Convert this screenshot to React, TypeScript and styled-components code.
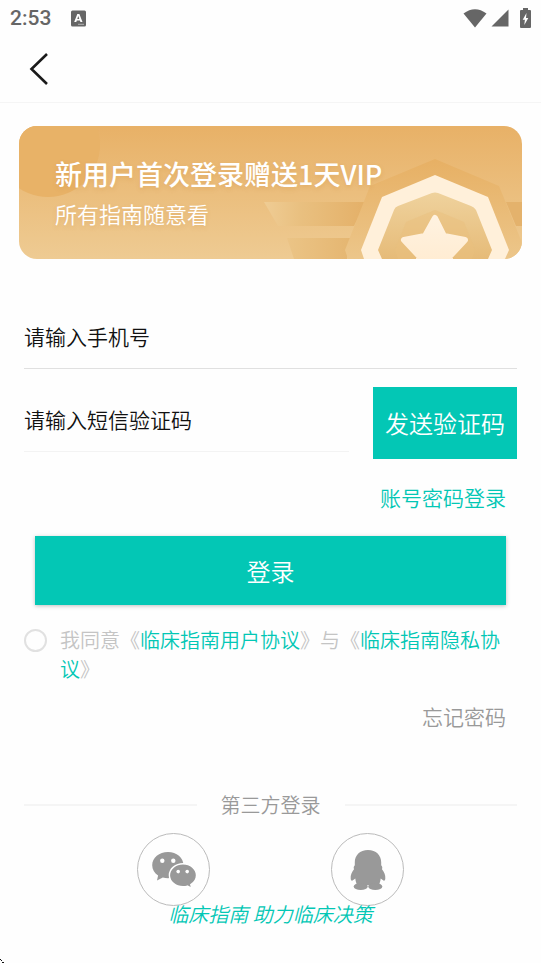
import React, { useState } from "react";
import styled, { createGlobalStyle } from "styled-components";

const teal = "#03c7b5";
const sans = `"Noto Sans CJK SC", "Noto Sans", sans-serif`;

const GlobalStyle = createGlobalStyle`
  *, *::before, *::after { box-sizing: border-box; }
  html, body { margin: 0; background: #fefefe; }
  body { font-family: ${sans}; font-size: 20px; line-height: 30px; font-weight: 350; color: #111; }
  button, input { font: inherit; }
`;

const Page = styled.div`
  position: relative;
  display: flex;
  flex-direction: column;
  min-height: 100vh;
  overflow: hidden;
`;

const StatusBar = styled.div`
  display: flex;
  align-items: center;
  justify-content: space-between;
  height: 36px;
  padding: 0 10px;
  color: #666;
`;

const StatusGroup = styled.div<{ $gap: number }>`
  display: flex;
  align-items: center;
  gap: ${(p) => p.$gap}px;
`;

const BatterySlot = styled.span`
  display: flex;
  padding-left: 7px;
`;

const Clock = styled.span`
  font-family: Roboto, sans-serif;
  font-size: 21px;
  line-height: 24px;
  font-weight: 500;
`;

const Header = styled.header`
  display: flex;
  align-items: center;
  height: 67px;
  padding: 0 24px;
  border-bottom: 1px solid #f5f5f5;
`;

const BackButton = styled.button`
  display: flex;
  padding: 0;
  border: 0;
  background: none;
  color: #1a1a1a;
  cursor: pointer;
`;

const Banner = styled.section`
  position: relative;
  display: flex;
  flex-direction: column;
  gap: 7px;
  height: 133px;
  margin: 23px 19px 0;
  padding: 32px 36px 0;
  border-radius: 18px;
  overflow: hidden;
  background: linear-gradient(#e8b167, #eecb93);
  color: #fff;
`;

const BannerArt = styled.svg`
  position: absolute;
  inset: 0;
  width: 100%;
  height: 100%;
`;

const BannerTitle = styled.h1`
  position: relative;
  margin: 0;
  font-size: 27px;
  line-height: 32px;
  font-weight: 500;
  white-space: nowrap;
  text-shadow: 0 2px 4px rgba(205, 140, 55, 0.3);
`;

const BannerText = styled.p`
  position: relative;
  margin: 0;
  font-size: 22px;
  line-height: 32px;
  text-shadow: 0 2px 4px rgba(205, 140, 55, 0.3);
`;

const Form = styled.form`
  display: flex;
  flex-direction: column;
  padding: 45px 24px 0;
`;

const Field = styled.input<{ $line: string }>`
  min-width: 0;
  width: 100%;
  height: 65px;
  padding: 0;
  border: 0;
  border-bottom: 1px solid ${(p) => p.$line};
  border-radius: 0;
  outline: 0;
  background: none;
  font-size: 21px;
  color: #111;
  &::placeholder { color: #111; opacity: 1; }
`;

const CodeRow = styled.div`
  display: flex;
  align-items: flex-start;
  gap: 24px;
  margin-top: 18px;
`;

const SolidButton = styled.button<{ $raised?: boolean }>`
  flex: none;
  height: ${(p) => (p.$raised ? 69 : 72)}px;
  margin: ${(p) => (p.$raised ? "23px 11px 0" : "0")};
  padding: 0 12px;
  border: 0;
  background: ${teal};
  box-shadow: ${(p) => (p.$raised ? "0 1px 4px rgba(0, 0, 0, 0.25)" : "none")};
  color: #fff;
  font-size: 24px;
  line-height: 36px;
  white-space: nowrap;
  cursor: pointer;
`;

const SideLink = styled.a<{ $muted?: boolean }>`
  align-self: flex-end;
  margin: ${(p) => (p.$muted ? "17px" : "22px")} 11px 0 0;
  font-size: 21px;
  line-height: 32px;
  color: ${(p) => (p.$muted ? "#999" : teal)};
  text-decoration: none;
`;

const Agreement = styled.div`
  display: flex;
  align-items: flex-start;
  gap: 13px;
  margin-top: 20px;
`;

const RoundCheck = styled.input`
  appearance: none;
  flex: none;
  width: 23px;
  height: 23px;
  margin: 4px 0 0;
  border: 2px solid #e1e1e1;
  border-radius: 50%;
  cursor: pointer;
  &:checked { border-color: ${teal}; background: ${teal}; }
`;

const AgreementText = styled.label`
  flex: 1;
  line-height: 29px;
  color: #c4c4c4;
`;

const TermsLink = styled.a`
  color: ${teal};
  text-decoration: none;
`;

const Divider = styled.div`
  display: flex;
  align-items: center;
  gap: 24px;
  margin: 58px 24px 0;
  color: #999;
  &::before, &::after {
    content: "";
    flex: 1;
    height: 2px;
    background: #f5f5f5;
  }
`;

const Providers = styled.div`
  display: flex;
  justify-content: center;
  gap: 121px;
  margin-top: 13px;
`;

const ProviderButton = styled.button`
  display: flex;
  align-items: center;
  justify-content: center;
  width: 73px;
  height: 73px;
  padding: 0;
  border: 1px solid #bbb;
  border-radius: 50%;
  background: none;
  color: #999;
  cursor: pointer;
`;

const Slogan = styled.p`
  margin: -7px 0 0;
  text-align: center;
  font-style: italic;
  color: ${teal};
`;

const CornerMark = styled.svg`
  position: absolute;
  left: 0;
  bottom: 0;
`;

function InputMethodIcon() {
  return (
    <svg width="15" height="17" viewBox="0 0 15 17" aria-hidden="true">
      <rect x="0" y="0.5" width="15" height="16" rx="1.5" fill="#666" />
      <path d="M3.2 12 6.3 4h2.1l3.1 8H9.4l-.5-1.5H5.8L5.3 12Zm3.1-3.1h2L7.3 5.9Z" fill="#fff" fillRule="evenodd" />
      <path d="M7.5 14.3h1m1 0h1m1 0h1" stroke="#fff" strokeWidth="1" />
    </svg>
  );
}

function WifiIcon() {
  return (
    <svg width="24" height="19" viewBox="0 0 24 19" aria-hidden="true">
      <path d="M.5 4.5Q12-4 23.5 4.5L12 18.5Z" fill="#666" />
    </svg>
  );
}

function SignalIcon() {
  return (
    <svg width="18" height="18" viewBox="0 0 18 18" aria-hidden="true">
      <path d="M17.5.5v17H.5Z" fill="#666" />
    </svg>
  );
}

function BatteryIcon() {
  return (
    <svg width="11" height="20" viewBox="0 0 11 20" aria-hidden="true">
      <path d="M3 0h5v2h2q1 0 1 1v16q0 1-1 1H1q-1 0-1-1V3q0-1 1-1h2Z" fill="#666" />
      <path d="M6.500 5 2.700 11.700h2.200L4.300 17l4-7H6Z" fill="#fff" />
    </svg>
  );
}

function BackIcon() {
  return (
    <svg width="30" height="34" viewBox="0 0 30 34" aria-hidden="true">
      <path d="M23 2 7.500 17 23 32" fill="none" stroke="currentColor" strokeWidth="2.6" />
    </svg>
  );
}

function WechatIcon() {
  return (
    <svg width="46" height="38" viewBox="0 0 46 38" aria-hidden="true">
      <path
        d="M17 1C8.200 1 1.200 6.700 1.200 14.200c0 4.200 2.200 7.700 5.900 10.200L6 29.500l5.800-3.100c1.700.5 3.400.8 5.200.8 8.600 0 15.500-5.800 15.500-13.100S25.600 1 17 1Z"
        fill="currentColor"
      />
      <path
        d="M32 12.800c-7.500 0-13.600 5.100-13.600 11.400 0 6.400 6.100 11.500 13.600 11.500 1.500 0 3-.2 4.400-.6l4.400 2.300-1-3.900c3.500-2.100 5.700-5.400 5.700-9.300 0-6.300-6-11.400-13.500-11.400Z"
        fill="currentColor"
        stroke="#fff"
        strokeWidth="1.400"
      />
      <g fill="#fff">
        <circle cx="11.300" cy="9.800" r="2.200" />
        <circle cx="22.300" cy="9.800" r="2.200" />
        <circle cx="27.200" cy="20.600" r="1.800" />
        <circle cx="36.200" cy="20.600" r="1.800" />
      </g>
    </svg>
  );
}

function QqIcon() {
  return (
    <svg width="36" height="42" viewBox="0 0 36 42" fill="currentColor" aria-hidden="true">
      <path d="M18 1C9.800 1 4.800 6.600 4.800 13.200v3c-1.200 1.200-1.300 2.400-.8 4C1.700 23 .4 26 .7 29.500c.1 2.200 1.200 2.800 2.600 1.400l2-1.400c.3 2.700 1 5 2 6.800h21.400c1-1.800 1.700-4.100 2-6.800l2 1.400c1.400 1.400 2.500.8 2.600-1.400.3-3.500-1-6.500-3.300-9.300.5-1.600.4-2.800-.8-4v-3C31.200 6.600 26.200 1 18 1Z" />
      <ellipse cx="10.700" cy="37.500" rx="7" ry="3.600" />
      <ellipse cx="25.300" cy="37.500" rx="7" ry="3.600" />
    </svg>
  );
}

function MedalArt() {
  return (
    <BannerArt viewBox="0 0 503 133" preserveAspectRatio="xMaxYMid slice" aria-hidden="true">
      <defs>
        <linearGradient id="stripe">
          <stop offset="0" stopColor="#efcc94" />
          <stop offset="0.35" stopColor="#e9c080" />
          <stop offset="1" stopColor="#e4b068" />
        </linearGradient>
        <linearGradient id="stripeLow">
          <stop offset="0" stopColor="#ebc486" />
          <stop offset="1" stopColor="#e5b671" />
        </linearGradient>
        <linearGradient id="plate" x1="0" y1="0" x2="0" y2="1">
          <stop offset="0" stopColor="#e7b064" />
          <stop offset="1" stopColor="#ecc68a" />
        </linearGradient>
        <linearGradient id="core" x1="0" y1="0" x2="0" y2="1">
          <stop offset="0" stopColor="#efd29d" />
          <stop offset="1" stopColor="#e6bb78" />
        </linearGradient>
        <linearGradient id="star" x1="0" y1="0" x2="0" y2="1">
          <stop offset="0" stopColor="#fff2e0" />
          <stop offset="1" stopColor="#ffebd0" />
        </linearGradient>
      </defs>
      <circle cx="29" cy="19" r="52" fill="#e8b267" />
      <path d="M245 76h102l-12 24h-76Z" fill="url(#stripe)" />
      <path d="M268 112h64l-4 21h-53Z" fill="url(#stripeLow)" />
      <path d="M487 76h16v24h-6Z" fill="#e4b26c" />
      <path d="M416 33 480 60l26 64-4 9H329l-3-9 25-64Z" fill="url(#plate)" />
      <path d="M416 49 469 71l21 53-4 9H345l-3-9 21-53Z" fill="#fff0da" />
      <path
        d="M413 67q3-1 6 0l33 13q3 1 5 4l16 40-4 9H363l-4-9 16-40q1-3 4-4Z"
        fill="url(#core)"
      />
      <path d="M416 84 445 96l11 28-3 9h-74l-3-9 11-28Z" fill="#e9c07e" opacity="0.5" />
      <path
        d="M416 92 425 110l21 4-15 16v12h-31v-12l-15-16 21-4Z"
        fill="url(#star)"
        stroke="url(#star)"
        strokeWidth="6"
        strokeLinejoin="round"
      />
    </BannerArt>
  );
}

export default function App() {
  const [agreed, setAgreed] = useState(false);

  return (
    <>
      <GlobalStyle />
      <Page>
        <StatusBar>
          <StatusGroup $gap={20}>
            <Clock>2:53</Clock>
            <InputMethodIcon />
          </StatusGroup>
          <StatusGroup $gap={4}>
            <WifiIcon />
            <SignalIcon />
            <BatterySlot>
              <BatteryIcon />
            </BatterySlot>
          </StatusGroup>
        </StatusBar>

        <Header>
          <BackButton type="button" aria-label="返回">
            <BackIcon />
          </BackButton>
        </Header>

        <Banner>
          <MedalArt />
          <BannerTitle>新用户首次登录赠送1天VIP</BannerTitle>
          <BannerText>所有指南随意看</BannerText>
        </Banner>

        <Form onSubmit={(e) => e.preventDefault()}>
          <Field $line="#e0e0e0" type="tel" placeholder="请输入手机号" aria-label="请输入手机号" />
          <CodeRow>
            <Field $line="#f3f3f3" type="text" placeholder="请输入短信验证码" aria-label="请输入短信验证码" />
            <SolidButton type="button">发送验证码</SolidButton>
          </CodeRow>
          <SideLink href="#password">账号密码登录</SideLink>
          <SolidButton $raised type="submit">登录</SolidButton>
          <Agreement>
            <RoundCheck
              id="agree"
              type="checkbox"
              checked={agreed}
              onChange={(e) => setAgreed(e.target.checked)}
            />
            <AgreementText htmlFor="agree">
              我同意《<TermsLink href="#terms">临床指南用户协议</TermsLink>》与《
              <TermsLink href="#privacy">临床指南隐私协议</TermsLink>》
            </AgreementText>
          </Agreement>
          <SideLink $muted href="#forgot">忘记密码</SideLink>
        </Form>

        <Divider>第三方登录</Divider>
        <Providers>
          <ProviderButton type="button" aria-label="微信登录">
            <WechatIcon />
          </ProviderButton>
          <ProviderButton type="button" aria-label="QQ登录">
            <QqIcon />
          </ProviderButton>
        </Providers>
        <Slogan>临床指南 助力临床决策</Slogan>

        <CornerMark width="4" height="4" viewBox="0 0 4 4" aria-hidden="true">
          <path d="M0 0h1v1H0ZM1 1h1v1H1ZM2 3h2v1H2Z" fill="#111" />
        </CornerMark>
      </Page>
    </>
  );
}
